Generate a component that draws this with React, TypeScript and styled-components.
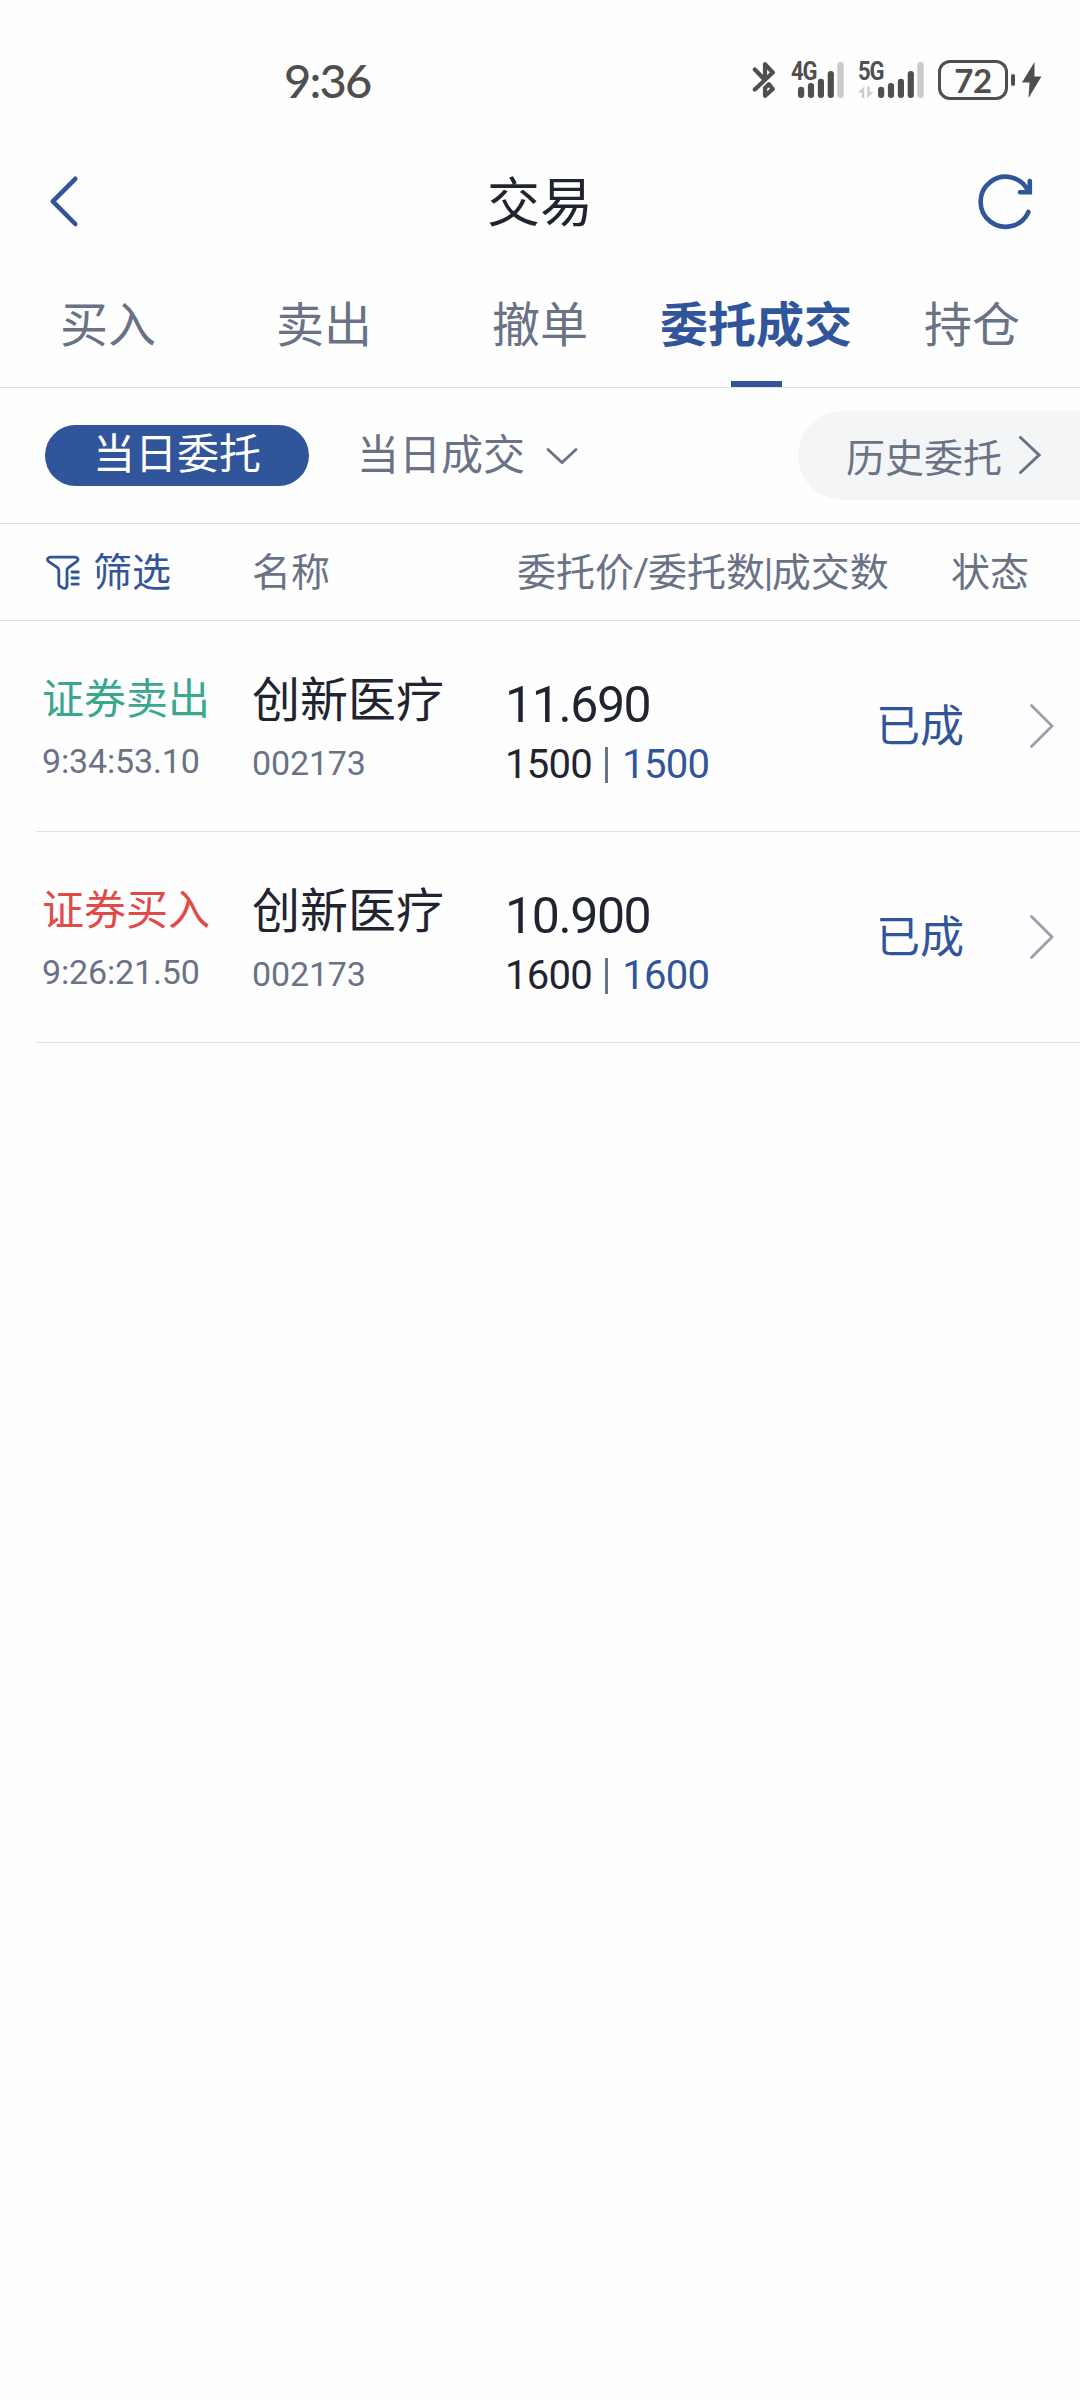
import React from "react";
import styled, { createGlobalStyle } from "styled-components";

const BLUE = "#31559b";
const GRAY = "#6a7286";
const INK = "#1f2430";
const LINE = "#e1e1e1";
const STATUS = "#4f4f4f";

const GlobalStyle = createGlobalStyle`
  * { box-sizing: border-box; }
  body { margin: 0; background: #fefefe; }
  svg { display: block; flex: none; }
`;

const Screen = styled.div`
  width: 1080px;
  height: 2400px;
  background: #fefefe;
  color: ${INK};
  font-family: Roboto, "Noto Sans CJK SC", sans-serif;
  display: flex;
  flex-direction: column;
  white-space: nowrap;
  overflow: hidden;
`;

const StatusBar = styled.div`
  height: 140px;
  padding: 20px 38px 0 284px;
  display: flex;
  align-items: center;
  justify-content: space-between;
  color: ${STATUS};
`;

const Clock = styled.span`
  font: 500 47px/48px Lato, sans-serif;
  letter-spacing: -1.8px;
`;

const StatusIcons = styled.div`
  display: flex;
  align-items: center;
`;

const Signal = styled.div<{ $gap: number; $width: number }>`
  width: ${(p) => p.$width}px;
  height: 36px;
  margin-left: ${(p) => p.$gap}px;
  position: relative;
`;

const Network = styled.span`
  position: absolute;
  left: 0;
  top: -2px;
  font: 700 25px/24px Roboto, sans-serif;
  letter-spacing: -1.2px;
  transform: scaleX(0.88);
  transform-origin: left;
`;

const Battery = styled.div`
  width: 70px;
  height: 40px;
  margin-left: 14px;
  border: 3px solid ${STATUS};
  border-radius: 12px;
  display: flex;
  align-items: center;
  justify-content: center;
  font: 700 33px/34px Lato, sans-serif;
  letter-spacing: -0.5px;
`;

const Nub = styled.span`
  width: 4px;
  height: 12px;
  margin: 0 7px 0 3px;
  border-radius: 2px;
  background: ${STATUS};
`;

const NavBar = styled.header`
  height: 124px;
  padding: 0 46px 0 48px;
  display: grid;
  grid-template-columns: 60px 1fr 60px;
  align-items: center;
  svg:last-child { justify-self: end; }
`;

const Title = styled.h1`
  margin: 0;
  padding: 3px 2px 0 0;
  text-align: center;
  font-size: 53px;
  font-weight: 400;
  line-height: 60px;
`;

const Tabs = styled.nav`
  height: 124px;
  border-bottom: 1px solid ${LINE};
  display: grid;
  grid-template-columns: repeat(5, 216px);
`;

const Tab = styled.div<{ $active?: boolean }>`
  display: flex;
  flex-direction: column;
  align-items: center;
  justify-content: space-between;
  padding-top: 32px;
  font-size: 48px;
  line-height: 60px;
  font-weight: ${(p) => (p.$active ? 700 : 400)};
  color: ${(p) => (p.$active ? BLUE : GRAY)};
`;

const Underline = styled.span`
  width: 51px;
  height: 6px;
  background: ${BLUE};
`;

const Filters = styled.div`
  height: 136px;
  border-bottom: 1px solid ${LINE};
  padding-left: 45px;
  display: flex;
  align-items: center;
  font-size: 42px;
`;

const TodayOrders = styled.div`
  width: 264px;
  height: 61px;
  border-radius: 31px;
  background: ${BLUE};
  color: #fff;
  line-height: 60px;
  text-align: center;
`;

const TodayDeals = styled.div`
  margin-left: 48px;
  display: flex;
  align-items: center;
  gap: 21px;
  line-height: 60px;
  color: ${GRAY};
`;

const History = styled.div`
  width: 282px;
  height: 89px;
  margin-left: auto;
  padding: 0 0 2px 48px;
  border-radius: 45px 0 0 45px;
  background: #f3f5f7;
  display: flex;
  align-items: center;
  gap: 17px;
  font-size: 39px;
  color: ${GRAY};
`;

const TableHead = styled.div`
  height: 97px;
  border-bottom: 1px solid ${LINE};
  padding: 1px 0 0 45px;
  display: grid;
  grid-template-columns: 207px 265px 434px 1fr;
  align-items: center;
  font-size: 39px;
  line-height: 58px;
  color: ${GRAY};
`;

const FilterButton = styled.div`
  display: flex;
  align-items: center;
  gap: 12px;
  color: ${BLUE};
`;

const Tight = styled.span<{ $pull: number }>`
  margin: 0 ${(p) => p.$pull}px;
`;

const Row = styled.div`
  height: 211px;
  margin-left: 36px;
  padding-left: 6px;
  border-bottom: 1px solid ${LINE};
  display: grid;
  grid-template-columns: 210px 253px 371px 154px 1fr;
`;

const Cell = styled.div<{ $top: number }>`
  padding-top: ${(p) => p.$top}px;
  display: flex;
  flex-direction: column;
`;

const Side = styled.span<{ $sell: boolean }>`
  font-size: 42px;
  line-height: 60px;
  color: ${(p) => (p.$sell ? "#3aa78f" : "#e04a48")};
`;

const Small = styled.span<{ $top: number }>`
  margin-top: ${(p) => p.$top}px;
  font-size: 34px;
  line-height: 40px;
  letter-spacing: -0.15px;
  color: ${GRAY};
`;

const Name = styled.span`
  font-size: 48px;
  line-height: 60px;
`;

const Price = styled.span`
  font-size: 50px;
  line-height: 60px;
  letter-spacing: -1.4px;
`;

const Quantity = styled.div`
  margin-top: 6px;
  display: flex;
  align-items: center;
  font-size: 40px;
  line-height: 48px;
  letter-spacing: -0.7px;
`;

const Divider = styled.i`
  width: 3px;
  height: 36px;
  margin: 0 14px 0 13px;
  background: ${GRAY};
`;

const Dealt = styled.span`
  color: ${BLUE};
`;

const State = styled.span`
  font-size: 44px;
  line-height: 60px;
  color: ${BLUE};
`;

interface Order {
  sell: boolean;
  side: string;
  time: string;
  name: string;
  code: string;
  price: string;
  quantity: string;
  dealt: string;
  state: string;
}

const orders: Order[] = [
  { sell: true, side: "证券卖出", time: "9:34:53.10", name: "创新医疗", code: "002173", price: "11.690", quantity: "1500", dealt: "1500", state: "已成" },
  { sell: false, side: "证券买入", time: "9:26:21.50", name: "创新医疗", code: "002173", price: "10.900", quantity: "1600", dealt: "1600", state: "已成" },
];

const tabs = ["买入", "卖出", "撤单", "委托成交", "持仓"];

const Bars = ({ offset, data }: { offset: number; data?: boolean }) => (
  <svg width={offset + 46} height="36" viewBox={`0 0 ${offset + 46} 36`}>
    {[24.7, 21, 16.7, 9].map((y, i) => (
      <rect key={y} x={offset + i * 9.9} y={y} width="6.2" height={36 - y} rx="3" fill={STATUS} />
    ))}
    <rect x={offset + 39.3} y="0" width="6.4" height="36" rx="3" fill="#cbcbcb" />
    {data && <path d="M0 30.5 6.3 24.5V36H3.8V30.5ZM9.2 24.5H11.7V30H15.5L9.2 36Z" fill="#cbcbcb" />}
  </svg>
);

const Bluetooth = () => (
  <svg width="24" height="38" viewBox="0 0 24 38" fill="none" stroke={STATUS} strokeWidth="4.2" strokeLinejoin="round" strokeLinecap="round">
    <path d="M2.8 8.5 12 18M2.8 28.5 20.8 11.5 13 3.2V17M13 27V34.8L20.8 28 16.8 23.2Z" />
  </svg>
);

const Bolt = () => (
  <svg width="20" height="36" viewBox="0 0 20 36">
    <path d="M12.5 0 0 20.5H7.5L6.5 36 19.5 14.5H12.5Z" fill={STATUS} />
  </svg>
);

const Back = () => (
  <svg width="32" height="54" viewBox="0 0 32 54" fill="none" stroke={BLUE} strokeWidth="4.6" strokeLinecap="round" strokeLinejoin="round">
    <path d="M27.3 3.8 4.8 26.3 27.3 49" />
  </svg>
);

const Refresh = () => (
  <svg width="56" height="56" viewBox="0 0 56 56" fill="none" stroke={BLUE} strokeWidth="4.6" strokeLinecap="round">
    <path d="M50.4 38A25 25 0 1 1 50.4 17.5" />
    <path d="M51.8 7V18.2H42" />
  </svg>
);

const Funnel = () => (
  <svg width="36" height="36" viewBox="0 0 36 36" fill="none" stroke={BLUE} strokeWidth="2.8" strokeLinecap="round" strokeLinejoin="round">
    <path d="M4.5 2.2H31Q34.5 3.6 32 6.4L23.5 12.5Q22 13.5 22 15V30.5Q21.5 34.5 18 33L15 31.2Q13.8 30.4 13.8 28.8V15Q13.8 13.5 12.2 12.4L3.4 6.4Q1 3.6 4.5 2.2Z" />
    <path d="M27 17H33.3M27 23H33.3M27 29.2H33.3" />
  </svg>
);

const Arrow = ({ width, height, color, weight }: { width: number; height: number; color: string; weight: number }) => (
  <svg width={width} height={height} viewBox={`0 0 ${width} ${height}`} fill="none" stroke={color} strokeWidth={weight}>
    <path d={`M1.5 1.5 ${width - 2} ${height / 2} 1.5 ${height - 1.5}`} strokeLinecap="round" />
  </svg>
);

const OrderRow = ({ order }: { order: Order }) => (
  <Row>
    <Cell $top={49}>
      <Side $sell={order.sell}>{order.side}</Side>
      <Small $top={11}>{order.time}</Small>
    </Cell>
    <Cell $top={50}>
      <Name>{order.name}</Name>
      <Small $top={12}>{order.code}</Small>
    </Cell>
    <Cell $top={54}>
      <Price>{order.price}</Price>
      <Quantity>
        {order.quantity}
        <Divider />
        <Dealt>{order.dealt}</Dealt>
      </Quantity>
    </Cell>
    <Cell $top={76}>
      <State>{order.state}</State>
    </Cell>
    <Cell $top={83}>
      <Arrow width={24} height={44} color="#9a9fae" weight={2.8} />
    </Cell>
  </Row>
);

export default function App() {
  return (
    <Screen>
      <GlobalStyle />
      <StatusBar>
        <Clock>9:36</Clock>
        <StatusIcons>
          <Bluetooth />
          <Signal $gap={15} $width={53}>
            <Bars offset={7} />
            <Network>4G</Network>
          </Signal>
          <Signal $gap={14} $width={66}>
            <Bars offset={20} data />
            <Network>5G</Network>
          </Signal>
          <Battery>72</Battery>
          <Nub />
          <Bolt />
        </StatusIcons>
      </StatusBar>
      <NavBar>
        <Back />
        <Title>交易</Title>
        <Refresh />
      </NavBar>
      <Tabs>
        {tabs.map((name) => (
          <Tab key={name} $active={name === "委托成交"}>
            {name}
            {name === "委托成交" && <Underline />}
          </Tab>
        ))}
      </Tabs>
      <Filters>
        <TodayOrders>当日委托</TodayOrders>
        <TodayDeals>
          <span>当日成交</span>
          <svg width="32" height="18" viewBox="0 0 32 18" fill="none" stroke={GRAY} strokeWidth="2.8" strokeLinecap="round">
            <path d="M2 2.5 16 15.5 30 2.5" />
          </svg>
        </TodayDeals>
        <History>
          历史委托
          <Arrow width={22} height={38} color={GRAY} weight={3} />
        </History>
      </Filters>
      <TableHead>
        <FilterButton>
          <Funnel />
          筛选
        </FilterButton>
        <span>名称</span>
        <span>
          委托价<Tight $pull={-1}>/</Tight>委托数<Tight $pull={-1.5}>|</Tight>成交数
        </span>
        <span>状态</span>
      </TableHead>
      {orders.map((order) => (
        <OrderRow key={order.time} order={order} />
      ))}
    </Screen>
  );
}
